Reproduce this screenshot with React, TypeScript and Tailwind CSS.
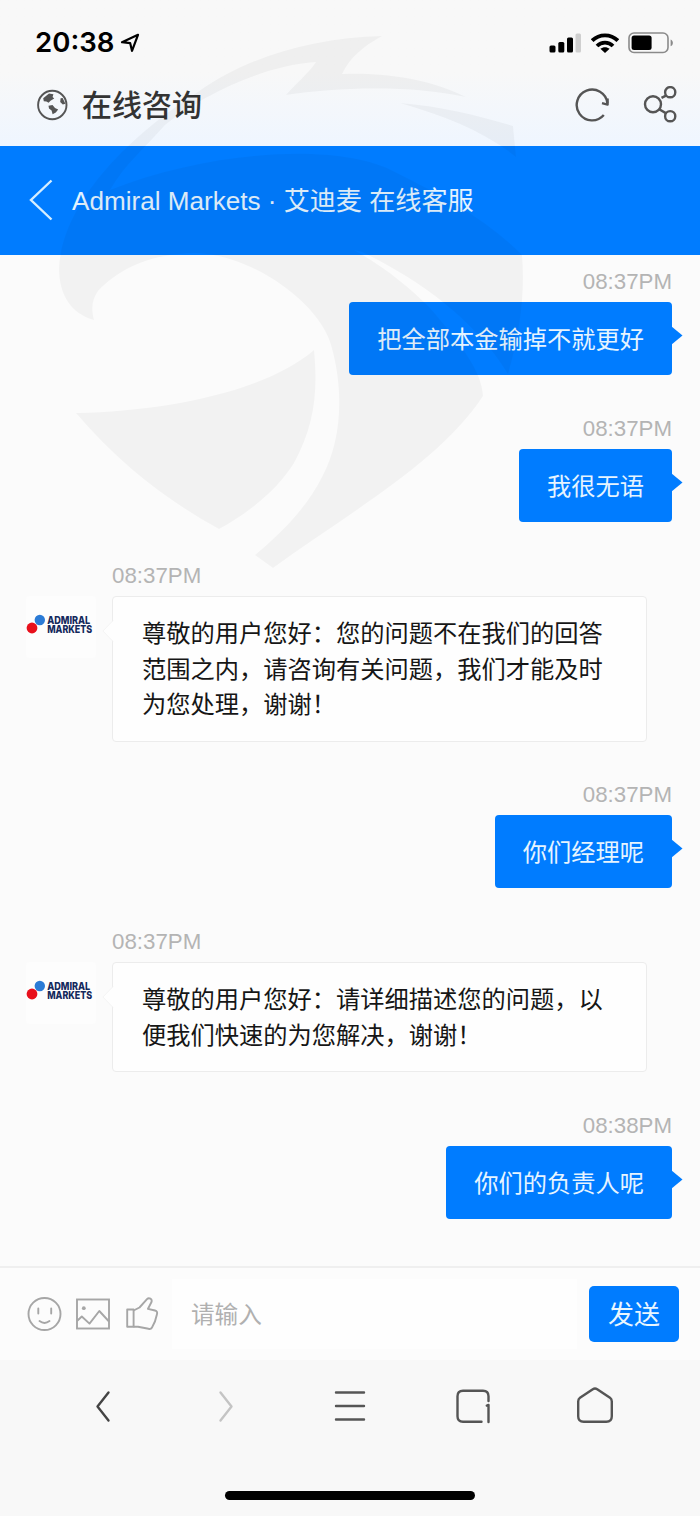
import type { ReactNode } from 'react';

type Message = {
  id: number;
  from: 'me' | 'agent';
  time: string;
  text: string;
};

const messages: Message[] = [
  { id: 1, from: 'me', time: '08:37PM', text: '把全部本金输掉不就更好' },
  { id: 2, from: 'me', time: '08:37PM', text: '我很无语' },
  {
    id: 3,
    from: 'agent',
    time: '08:37PM',
    text: '尊敬的用户您好：您的问题不在我们的回答范围之内，请咨询有关问题，我们才能及时为您处理，谢谢！',
  },
  { id: 4, from: 'me', time: '08:37PM', text: '你们经理呢' },
  {
    id: 5,
    from: 'agent',
    time: '08:37PM',
    text: '尊敬的用户您好：请详细描述您的问题，以便我们快速的为您解决，谢谢！',
  },
  { id: 6, from: 'me', time: '08:38PM', text: '你们的负责人呢' },
];

/** Eagle watermark, drawn over the whole page */
function Watermark() {
  return (
    <svg
      className="pointer-events-none absolute left-0 top-0 z-10"
      width="560"
      height="600"
      viewBox="0 0 560 600"
      fill="#000"
      fillOpacity="0.035"
    >
      <path d="M382 36C310 38 245 58 198 92C125 138 62 205 59 268C59 296 72 314 94 320C91 308 92 300 98 291C118 270 148 254 195 253C255 255 320 305 331 345C344 390 342 440 322 477C308 505 285 530 255 555L273 568C350 512 440 462 483 396C482 372 462 345 430 308C410 288 385 267 354 250L362 252C420 280 475 320 508 374C521 330 525 290 522 255C490 222 445 197 395 172C340 142 210 150 110 190C125 164 145 148 165 125C200 97 260 66 316 62C308 74 295 84 286 95C340 87 410 85 466 97C435 82 395 72 342 74C350 58 362 47 382 36Z" />
      <path d="M400 103C440 106 480 116 513 126L516 157C485 132 445 116 400 103Z" />
      <path d="M76 413C165 411 265 392 314 350C318 390 315 425 294 463C277 490 250 512 219 529C170 502 122 467 76 413Z" />
    </svg>
  );
}

function StatusBar() {
  return (
    <div className="flex h-[86px] items-center justify-between pl-[35px] pr-[26px] text-black">
      <div className="flex items-center">
        <span className="font-['Inter',sans-serif] text-[27.6px] font-semibold leading-none">20:38</span>
        <svg className="ml-[6px]" width="20" height="20" viewBox="0 0 20 20" fill="none" stroke="#000" strokeWidth="2.2" strokeLinejoin="round">
          <path d="M18 1.8L2 9.2L10.2 10.2L12 17.8Z" />
        </svg>
      </div>
      <div className="flex items-center">
        <svg width="32" height="20" viewBox="0 0 32 20">
          <rect x="0.5" y="12.5" width="6" height="7" rx="1.5" />
          <rect x="9.3" y="9" width="6" height="10.5" rx="1.5" />
          <rect x="18" y="4.5" width="6" height="15" rx="1.5" />
          <rect x="26.5" y="0.5" width="5.5" height="19" rx="1.5" fill="#cfcfcf" />
        </svg>
        <svg className="ml-[10px]" width="28" height="20" viewBox="0 0 28 20" fill="none" stroke="#000" strokeWidth="3.8">
          <path d="M1.2 7.6C8.2 0.6 19.8 0.6 26.8 7.6" />
          <path d="M6 13C10.4 8.6 17.6 8.6 22 13" />
          <path d="M14 20L9.4 15.8C12 13.6 16 13.6 18.6 15.8Z" fill="#000" stroke="none" />
        </svg>
        <svg className="ml-[9px]" width="46" height="22" viewBox="0 0 46 22">
          <rect x="1" y="1" width="39" height="19.5" rx="5" fill="none" stroke="#8a8a8a" strokeWidth="1.6" />
          <rect x="3.6" y="3.6" width="20" height="14.4" rx="2.5" />
          <path d="M42.6 7.4C45.6 8.6 45.6 13 42.6 14.2Z" fill="#8a8a8a" />
        </svg>
      </div>
    </div>
  );
}

function BrowserBar() {
  return (
    <div className="flex h-[60px] items-center justify-between pb-[22px] pl-[36px] pr-[22px]">
      <div className="flex items-center gap-[14px]">
        <svg width="32" height="32" viewBox="0 0 32 32">
          <circle cx="16.3" cy="16" r="14.2" fill="none" stroke="#555" strokeWidth="1.9" />
          <path d="M7.2 9.2L13 4.4L17.4 5.2L16.6 8L18.2 9.6L14.5 11.8L12.6 13.8L10.4 12.4L7.8 12.2Z" fill="#555" />
          <path d="M12.5 16.8L16.5 16L19 19L22.2 20.6L19.8 23.6L16.6 25.2L15.6 21.4L13 19.6Z" fill="#555" />
          <path d="M24.6 9.2L26.6 9L29.4 14.8L26.8 15.6L24.2 13Z" fill="#555" />
        </svg>
        <h1 className="pt-[2px] text-[30px] font-medium leading-none text-[#333]">在线咨询</h1>
      </div>
      <div className="flex items-center gap-[32px]">
        <svg width="36" height="36" viewBox="0 0 36 36" fill="none" stroke="#555" strokeWidth="2.4">
          <path d="M29.8 28A15.4 15.4 0 1 1 33.4 16" />
          <path d="M33.6 11.5V17.6L28 16.2" strokeLinejoin="round" />
        </svg>
        <svg width="36" height="38" viewBox="0 0 36 38" fill="none" stroke="#555" strokeWidth="2.4">
          <circle cx="11" cy="18.2" r="8" />
          <circle cx="28.2" cy="6.2" r="5.1" />
          <circle cx="28.2" cy="30.2" r="5.1" />
          <path d="M19.5 11.9L24 9.6M17.2 23.2L24.2 27.4" />
        </svg>
      </div>
    </div>
  );
}

function ChatHeader() {
  return (
    <header className="flex h-[109px] items-center bg-[#007cff] pl-[28px]">
      <svg width="26" height="44" viewBox="0 0 26 44" fill="none" stroke="#d5eeff" strokeWidth="2.4">
        <path d="M23.5 1.5L3 21L23.5 40.5" />
      </svg>
      <h2 className="ml-[18px] whitespace-pre pt-px text-[26.1px] leading-none text-[#e3f3ff]">Admiral Markets · 艾迪麦 在线客服</h2>
    </header>
  );
}

function Avatar() {
  return (
    <svg className="mr-[16px] shrink-0 overflow-visible rounded bg-[#fdfdfd]" width="70" height="62" viewBox="26 597 70 62">
      <circle cx="32" cy="629" r="5.4" fill="#e8101c" />
      <circle cx="39.8" cy="621" r="5.2" fill="#2b7bd6" />
      <g fill="#14295c" fontFamily="Inter, sans-serif" fontWeight="800" fontSize="10.8">
        <text x="47.2" y="624.8" textLength="43" lengthAdjust="spacingAndGlyphs">ADMIRAL</text>
        <text x="47.2" y="633.6" textLength="45" lengthAdjust="spacingAndGlyphs">MARKETS</text>
      </g>
    </svg>
  );
}

function MyMessage({ message }: { message: Message }) {
  return (
    <div className="mb-[36.4px] flex flex-col items-end pr-7">
      <time className="mb-1 pt-px text-[22.3px] leading-8 text-[#b4b4b4]">{message.time}</time>
      <div className="relative rounded bg-[#007cff] px-7 pb-[17.95px] pt-[19.95px] text-[24.25px] leading-[35.5px] text-[#e6f4ff]">
        {message.text}
        <svg className="absolute -right-[11px] top-[24px]" width="12" height="20" viewBox="0 0 12 20">
          <path d="M0 0L11.5 9.5L0 19Z" fill="#007cff" />
        </svg>
      </div>
    </div>
  );
}

function AgentMessage({ message }: { message: Message }) {
  return (
    <div className="mb-[36.4px] pl-[26px]">
      <time className="mb-1 block pl-[86px] pt-px text-[22.3px] leading-8 text-[#b4b4b4]">{message.time}</time>
      <div className="flex items-start">
        <Avatar />
        <div className="relative w-[535px] rounded border border-[#ececec] bg-[#fefefe] px-[29px] pb-[17.75px] pt-[19.75px] text-[24.25px] leading-[35.5px] text-[#161616]">
          {message.text}
          <svg className="absolute -left-[11px] top-[22px]" width="12" height="24" viewBox="0 0 12 24">
            <path d="M12 1L1 12L12 23Z" fill="#fefefe" />
            <path d="M11 1.5L1 12L11 22.5" fill="none" stroke="#f5f5f5" />
          </svg>
        </div>
      </div>
    </div>
  );
}

function InputBar() {
  return (
    <div className="flex h-[94px] items-center border-t-2 border-[#efefef] bg-[#fcfcfc] pl-[27px] pr-[21px]">
      <div className="flex items-center gap-[13px]">
        <svg width="35" height="35" viewBox="0 0 35 35" fill="none" stroke="#a6a6a6" strokeWidth="1.9" strokeLinecap="round">
          <circle cx="17.5" cy="17" r="16" />
          <path d="M11.3 11.5V16.5M24.2 11.5V16.5M12.5 24C15.5 26.3 19.5 26.3 22.5 24" />
        </svg>
        <svg width="36" height="35" viewBox="0 0 36 35" fill="none" stroke="#a6a6a6" strokeWidth="1.9">
          <rect x="2" y="2.5" width="32" height="29" />
          <circle cx="8.8" cy="11.2" r="1.9" fill="#a6a6a6" stroke="none" />
          <path d="M2 24L6.8 19.5L14.5 26.6L24.3 14L34 24.5" strokeLinejoin="round" />
        </svg>
        <svg width="35" height="35" viewBox="0 0 35 35" fill="none" stroke="#a6a6a6" strokeWidth="1.9" strokeLinejoin="round">
          <path d="M3.2 12.5H9.6V29.8H3.2Z" />
          <path d="M9.6 13.5L15.5 10.5L23 2.2C25 0 28.5 2 27.5 5L24 11.8L31 13.5C33 14 33.5 15.5 32.9 17.5C32 22 30.5 26.5 28 30.5C27.3 31.8 26.1 32.2 24.5 31.8L14 29.8H9.6" />
        </svg>
      </div>
      <input
        className="ml-[13px] h-[70px] w-[405px] bg-[#fefefe] pl-[19px] pt-[3px] text-[23.6px] leading-none outline-none placeholder:text-[#b0b0b0]"
        placeholder="请输入"
      />
      <button className="ml-auto h-[56px] w-[90px] rounded-[5px] bg-[#007cff] pt-px text-[26px] leading-none text-[#e9f6ff]">发送</button>
    </div>
  );
}

function NavIcon({ children, color = '#555' }: { children: ReactNode; color?: string }) {
  return (
    <svg width="40" height="40" viewBox="0 0 40 40" fill="none" stroke={color} strokeWidth="2.4" strokeLinecap="round" strokeLinejoin="round">
      {children}
    </svg>
  );
}

function BottomBar() {
  return (
    <footer className="flex h-[156px] flex-col items-center justify-between bg-[#f8f8f8] pb-4 pt-[26px]">
      <div className="flex w-full justify-between pl-[83px] pr-[85px]">
        <NavIcon color="#444"><path d="M25.5 6.5L14.5 20.5L25.5 34.5" /></NavIcon>
        <NavIcon color="#c4c4c4"><path d="M14.5 6.5L25.5 20.5L14.5 34.5" /></NavIcon>
        <NavIcon><path d="M7 6.5H35M7 20H35M7 33.5H35" /></NavIcon>
        <NavIcon>
          <path d="M29.5 35.8H11Q5.5 35.8 5.5 30.3V10.2Q5.5 4.7 11 4.7H31Q36.5 4.7 36.5 10.2V15" />
          <path d="M34.8 19.6L36.5 19V36" />
        </NavIcon>
        <NavIcon><path d="M3.2 15.5Q3.2 13 5 11.8L17.8 3.2Q20 1.7 22.2 3.2L35 11.8Q36.8 13 36.8 15.5V30.3Q36.8 35.8 31.3 35.8H8.7Q3.2 35.8 3.2 30.3Z" /></NavIcon>
      </div>
      <div className="h-[9px] w-[250px] rounded-full bg-black" />
    </footer>
  );
}

export default function App() {
  return (
    <div className="relative flex h-[1516px] w-[700px] flex-col overflow-hidden bg-[#fbfbfb] font-['Liberation_Sans','Noto_Sans_CJK_SC',sans-serif]">
      <Watermark />
      <div className="bg-linear-to-b from-[#f8f8f8] from-50% to-[#eff6ff]">
        <StatusBar />
        <BrowserBar />
      </div>
      <ChatHeader />
      <main className="flex-1 overflow-hidden pt-[10px]">
        {messages.map((m) =>
          m.from === 'me' ? <MyMessage key={m.id} message={m} /> : <AgentMessage key={m.id} message={m} />
        )}
      </main>
      <InputBar />
      <BottomBar />
    </div>
  );
}
